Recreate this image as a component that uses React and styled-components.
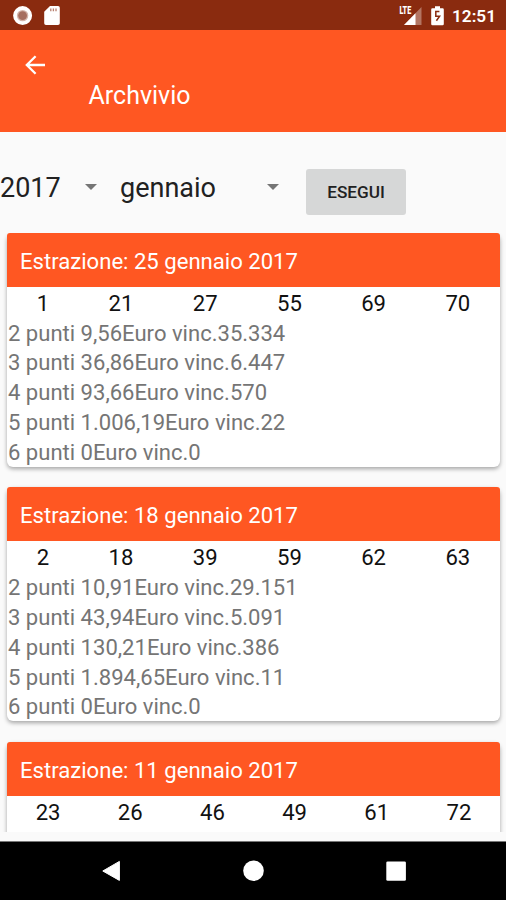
import styled, { createGlobalStyle } from "styled-components";

const draws = [
  {
    date: "25 gennaio 2017",
    numbers: [1, 21, 27, 55, 69, 70],
    prizes: [
      "2 punti 9,56Euro vinc.35.334",
      "3 punti 36,86Euro vinc.6.447",
      "4 punti 93,66Euro vinc.570",
      "5 punti 1.006,19Euro vinc.22",
      "6 punti 0Euro vinc.0",
    ],
  },
  {
    date: "18 gennaio 2017",
    numbers: [2, 18, 39, 59, 62, 63],
    prizes: [
      "2 punti 10,91Euro vinc.29.151",
      "3 punti 43,94Euro vinc.5.091",
      "4 punti 130,21Euro vinc.386",
      "5 punti 1.894,65Euro vinc.11",
      "6 punti 0Euro vinc.0",
    ],
  },
  {
    date: "11 gennaio 2017",
    numbers: [23, 26, 46, 49, 61, 72],
    prizes: [],
  },
];

const App = () => {
  return (
    <Screen>
      <GlobalStyle />

      <StatusBar>
        <svg width="22" height="22" viewBox="0 0 22 22">
          <circle cx="10.6" cy="10.6" r="7.6" fill="#d3b5ab" stroke="#fff" strokeWidth="3.8" />
          <circle cx="10.6" cy="10.6" r="4.4" fill="#a66f60" />
        </svg>
        <svg className="sd-card" width="16" height="20" viewBox="0 0 16 20">
          <path fill="#fff" d="M6 0h8A1.8 1.8 0 0 1 15.8 1.8v15.4a1.8 1.8 0 0 1-1.8 1.8H2A1.8 1.8 0 0 1 .2 17.2V5.8z" />
          <path stroke="#8a2b0f" strokeWidth="1.3" opacity=".6" d="M6.8 2.6v2.6M9.4 2.6v2.6M12 2.6v2.6" />
        </svg>
        <div className="spacer" />
        <svg width="24" height="24" viewBox="0 -2 24 24">
          <path fill="#fff" opacity=".35" d="M22.5 1v18H5z" />
          <path fill="#fff" d="M16.5 7.2V19H5z" />
          <path fill="#8a2b0f" d="M0 0h12.8v9.2H0z" />
          <text x="0.4" y="8.4" fill="#fff" fontSize="10" fontWeight="900" textLength="11.8" lengthAdjust="spacingAndGlyphs">
            LTE
          </text>
        </svg>
        <svg className="battery" width="13" height="20" viewBox="0 0 13 20">
          <path fill="#fff" d="M4 .2h5v2h2.6A1.2 1.2 0 0 1 12.8 3.4v14.6a1.2 1.2 0 0 1-1.2 1.2H1.4A1.2 1.2 0 0 1 .2 18V3.4a1.2 1.2 0 0 1 1.2-1.2H4z" />
          <path fill="none" stroke="#8a2b0f" strokeWidth="1.5" d="M8.4 5.6H4.8v4.6h3.8l-3.2 4.6" />
        </svg>
        <Clock>12:51</Clock>
      </StatusBar>

      <AppBar>
        <svg width="22" height="20" viewBox="0 0 22 20">
          <path fill="none" stroke="#fff" strokeWidth="2.3" d="M20 10H2.2M10.6 1.2 1.8 10l8.8 8.8" />
        </svg>
        <h1>Archvivio</h1>
      </AppBar>

      <Filters>
        <Spinner $width={103}>
          2017 <Caret />
        </Spinner>
        <Spinner $width={165}>
          gennaio <Caret />
        </Spinner>
        <RunButton>ESEGUI</RunButton>
      </Filters>

      <DrawList>
        {draws.map((draw) => (
          <Card key={draw.date}>
            <CardTitle>Estrazione: {draw.date}</CardTitle>
            <Numbers>
              {draw.numbers.map((n) => (
                <span key={n}>{n}</span>
              ))}
            </Numbers>
            <Prizes>
              {draw.prizes.map((prize) => (
                <li key={prize}>{prize}</li>
              ))}
            </Prizes>
          </Card>
        ))}
      </DrawList>

      <NavBar>
        <svg width="20" height="22" viewBox="0 0 20 22">
          <path fill="#fff" stroke="#fff" strokeLinejoin="round" d="M18.4 1.4v19L1.8 11z" />
        </svg>
        <svg width="22" height="22" viewBox="0 0 22 22">
          <circle cx="10.5" cy="10.8" r="10.3" fill="#fff" />
        </svg>
        <svg width="20" height="22" viewBox="0 0 20 22">
          <rect x=".3" y="1.4" width="19.6" height="19.4" rx="1.4" fill="#fff" />
        </svg>
      </NavBar>
    </Screen>
  );
};

const GlobalStyle = createGlobalStyle`
  * {
    box-sizing: border-box;
    margin: 0;
    padding: 0;
  }

  body {
    font-family: Roboto, "Noto Sans", sans-serif;
    background-color: #fafafa;
  }

  svg {
    display: block;
    flex-shrink: 0;
  }
`;

const Screen = styled.div`
  width: 506px;
  height: 900px;
  display: flex;
  flex-direction: column;
  overflow: hidden;
  background-color: #fafafa;
`;

const StatusBar = styled.header`
  height: 30px;
  flex-shrink: 0;
  display: flex;
  align-items: center;
  padding: 2px 10px 0 12px;
  background-color: #8a2b0f;

  .sd-card {
    margin-left: 10px;
  }
  .spacer {
    flex: 1;
  }
  .battery {
    margin-left: 8px;
  }
`;

const Clock = styled.span`
  margin-left: 8px;
  color: #fff;
  font-size: 17.2px;
  font-weight: 600;
  line-height: 20px;
`;

const AppBar = styled.div`
  height: 102px;
  flex-shrink: 0;
  padding: 24.5px 0 0 24.5px;
  background-color: #ff5722;

  h1 {
    margin: -2.5px 0 0 64px;
    color: #fff;
    font-size: 25px;
    font-weight: 400;
    line-height: 48px;
  }
`;

const Filters = styled.div`
  height: 100.5px;
  flex-shrink: 0;
  display: flex;
  align-items: flex-start;
  padding-top: 37px;
`;

const Spinner = styled.div`
  width: ${({ $width }) => $width}px;
  margin-right: 17px;
  padding-right: 6.5px;
  display: flex;
  align-items: center;
  justify-content: space-between;
  color: #212121;
  font-size: 27px;
  line-height: 38px;
`;

const Caret = styled.i`
  margin-top: -2px;
  border: 6px solid transparent;
  border-top-color: #757575;
  border-bottom: 0;
`;

const RunButton = styled.button`
  width: 100px;
  height: 46px;
  margin-left: 4px;
  border: 0;
  border-radius: 3px;
  background-color: #d6d7d7;
  color: #212121;
  font: 500 17.2px/46px Roboto, sans-serif;
`;

const DrawList = styled.main`
  height: 599.5px;
  flex-shrink: 0;
  display: flex;
  flex-direction: column;
  gap: 20.5px;
  padding: 0 6px 0 7px;
  overflow: hidden;
`;

const Card = styled.article`
  flex-shrink: 0;
  border-radius: 6px;
  background-color: #fff;
  box-shadow: 0 2px 4px rgba(0, 0, 0, 0.34);
`;

const CardTitle = styled.h2`
  height: 54px;
  padding-left: 13px;
  border-radius: 3px 3px 0 0;
  background-color: #ff5722;
  color: #fff;
  font-size: 22.1px;
  font-weight: 400;
  line-height: 56px;
`;

const Numbers = styled.div`
  display: flex;
  color: #111;
  font-size: 22.1px;
  line-height: 32px;

  span {
    flex: 1 1 auto;
    text-align: center;
  }
`;

const Prizes = styled.ul`
  height: 148.2px;
  padding-left: 1px;
  list-style: none;
  color: #757575;
  font-size: 22.05px;
  line-height: 29.8px;
`;

const NavBar = styled.nav`
  flex: 1;
  margin-top: 9px;
  display: flex;
  align-items: center;
  justify-content: space-between;
  padding: 0 100px 0 101px;
  border-top: 1px solid #777;
  background-color: #000;
`;

export default App;
